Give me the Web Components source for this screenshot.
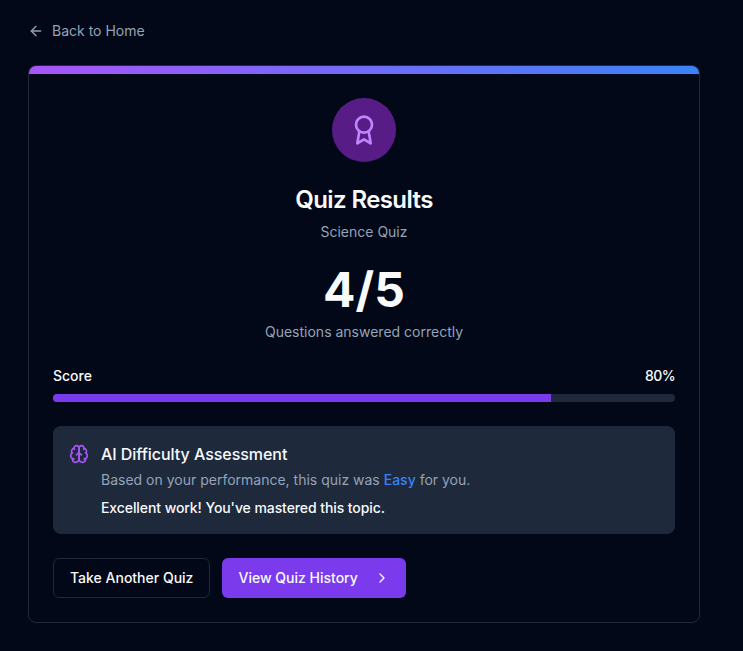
<!DOCTYPE html>
<html lang="en">
<head>
<meta charset="utf-8">
<title>Quiz Results</title>
<style>
body{margin:0;background:#020817;color:#f8fafc;font:14px/20px Inter,"Liberation Sans",sans-serif;-webkit-font-smoothing:antialiased}
</style>
</head>
<body>
<quiz-page></quiz-page>
<script>
const define = (name, css, html) => customElements.define(name, class extends HTMLElement {
  constructor() {
    super();
    this.attachShadow({mode: 'open'}).innerHTML = `<style>*{box-sizing:border-box}${css}</style>${html}`;
  }
});

define('line-icon', `:host{display:block;flex:none;width:var(--size,16px);height:var(--size,16px)}
  ::slotted(svg){display:block;width:100%;height:100%;fill:none;stroke:currentColor;stroke-width:2;stroke-linecap:round;stroke-linejoin:round}`, `<slot></slot>`);

define('back-link', `:host{display:flex;align-items:center;gap:8px;width:max-content;color:#94a3b8}`,
  `<line-icon><svg viewBox="0 0 24 24"><path d="m12 19-7-7 7-7"/><path d="M19 12H5"/></svg></line-icon><slot></slot>`);

define('result-header', `:host{display:flex;flex-direction:column;align-items:center;padding:24px}
  .badge{display:grid;place-items:center;width:64px;height:64px;border-radius:50%;background:#581c87;color:#c084fc;--size:32px}
  h1{margin:22px 0 0;font-size:24px;line-height:32px;font-weight:600;letter-spacing:-.6px}
  p{margin:6px 0 0;color:#94a3b8}`,
  `<div class="badge"><line-icon><svg viewBox="0 0 24 24"><circle cx="12" cy="8" r="6"/><path d="M15.477 12.89 17 22l-5-3-5 3 1.523-9.11"/></svg></line-icon></div>
  <h1><slot name="title"></slot></h1><p><slot></slot></p>`);

define('quiz-score', `:host{display:block;text-align:center}
  .n{font-size:48px;line-height:48px;font-weight:700}
  p{margin:8px 0 0;color:#94a3b8}`, `<div class="n"><slot name="value"></slot></div><p><slot></slot></p>`);

define('score-bar', `:host{display:block}
  .row{display:flex;justify-content:space-between;font-weight:500}
  ::slotted([slot=value]){letter-spacing:-.6px}
  .track{height:8px;margin-top:8px;border-radius:4px;background:#1e293b;overflow:hidden}
  .fill{height:100%;width:80%;background:#7c3aed}`,
  `<div class="row"><slot name="label"></slot><slot name="value"></slot></div><div class="track"><div class="fill"></div></div>`);

define('ai-assessment', `:host{display:flex;gap:12px;padding:16px;border-radius:8px;background:#1e293b}
  line-icon{--size:20px;margin-top:2px;color:#a855f7}
  h2{margin:0;font-size:16px;line-height:24px;font-weight:500;letter-spacing:-.04px}
  p{margin:4px 0 0;color:#94a3b8}
  .note{margin-top:8px;font-weight:500;color:#f8fafc;letter-spacing:-.08px}
  ::slotted(b){color:#3b82f6;font-weight:500}`,
  `<line-icon><svg viewBox="0 0 24 24"><path d="M12 5a3 3 0 1 0-5.997.125 4 4 0 0 0-2.526 5.77 4 4 0 0 0 .556 6.588A4 4 0 1 0 12 18Z"/><path d="M12 5a3 3 0 1 1 5.997.125 4 4 0 0 1 2.526 5.77 4 4 0 0 1-.556 6.588A4 4 0 1 1 12 18Z"/><path d="M15 13a4.5 4.5 0 0 1-3-4 4.5 4.5 0 0 1-3 4"/><path d="M17.599 6.5a3 3 0 0 0 .399-1.375"/><path d="M6.003 5.125A3 3 0 0 0 6.401 6.5"/><path d="M3.477 10.896a4 4 0 0 1 .585-.396"/><path d="M19.938 10.5a4 4 0 0 1 .585.396"/><path d="M6 18a4 4 0 0 1-1.967-.516"/><path d="M19.967 17.484A4 4 0 0 1 18 18"/></svg></line-icon>
  <div><h2><slot name="title"></slot></h2><p><slot></slot></p><p class="note"><slot name="note"></slot></p></div>`);

define('quiz-button', `:host{display:block}
  button{display:flex;align-items:center;gap:16px;height:40px;padding:0 16px;border:1px solid #1e293b;border-radius:6px;background:#020817;color:#f8fafc;font:500 14px/20px Inter,"Liberation Sans",sans-serif}
  :host([primary]) button{border:0;background:#7c3aed}`, `<button><slot></slot></button>`);

define('result-card', `:host{display:block;border:1px solid #1e293b;border-radius:8px;overflow:hidden}
  .stripe{height:8px;background:linear-gradient(to right,#a855f7,#3b82f6)}
  .body{display:flex;flex-direction:column;gap:24px;padding:0 24px 24px}`,
  `<div class="stripe"></div><slot name="header"></slot><div class="body"><slot></slot></div>`);

define('quiz-page', `:host{display:block;padding:21px 43px 0 28px}
  result-card{margin-top:24px;height:558px}
  .actions{display:flex;gap:12px}`,
  `<back-link>Back to Home</back-link>
  <result-card>
    <result-header slot="header"><span slot="title">Quiz Results</span>Science Quiz</result-header>
    <quiz-score><span slot="value">4/5</span>Questions answered correctly</quiz-score>
    <score-bar><span slot="label">Score</span><span slot="value">80%</span></score-bar>
    <ai-assessment><span slot="title">AI Difficulty Assessment</span>Based on your performance, this quiz was <b>Easy</b> for you.<span slot="note">Excellent work! You've mastered this topic.</span></ai-assessment>
    <div class="actions"><quiz-button>Take Another Quiz</quiz-button><quiz-button primary>View Quiz History<line-icon><svg viewBox="0 0 24 24"><path d="m9 18 6-6-6-6"/></svg></line-icon></quiz-button></div>
  </result-card>`);
</script>
</body>
</html>
